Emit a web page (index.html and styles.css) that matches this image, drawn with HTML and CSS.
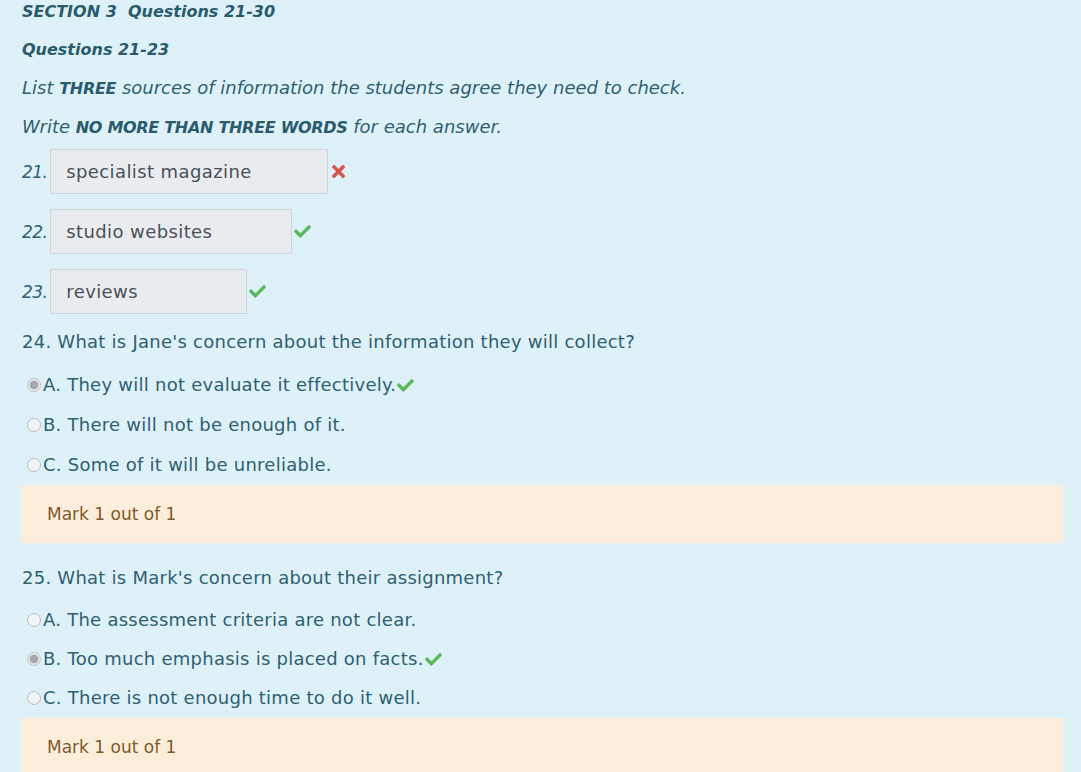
FILE: index.html
```html
<!DOCTYPE html>
<html lang="en">
<head>
<meta charset="utf-8">
<title>Section 3</title>
<link rel="stylesheet" href="styles.css">
</head>
<body>
<div class="page">
  <div class="intro">
    <p class="title">SECTION 3&nbsp; Questions 21-30</p>
    <p class="title">Questions 21-23</p>
    <p class="instr">List <b>THREE</b> sources of information the students agree they need to check.</p>
    <p class="instr last">Write <b>NO MORE THAN THREE WORDS</b> for each answer.</p>
  </div>

  <div class="gap-row">
    <span class="num">21.</span>
    <span class="field w1">specialist magazine</span>
    <svg class="cross" viewBox="0 80 352 352"><path d="M242.72 256l100.07-100.07c12.28-12.28 12.28-32.19 0-44.48l-22.24-22.24c-12.28-12.28-32.19-12.28-44.48 0L176 189.28 75.930 89.21c-12.28-12.28-32.19-12.28-44.48 0L9.21 111.45c-12.28 12.28-12.28 32.19 0 44.48L109.28 256 9.21 356.07c-12.28 12.28-12.28 32.190 0 44.480l22.24 22.24c12.28 12.28 32.2 12.28 44.48 0L176 322.72l100.07 100.07c12.28 12.28 32.2 12.28 44.48 0l22.24-22.240c12.28-12.28 12.28-32.19 0-44.48L242.72 256z"/></svg>
  </div>
  <div class="gap-row">
    <span class="num">22.</span>
    <span class="field w2">studio websites</span>
    <svg class="tick" viewBox="0 64 512 392"><path d="M173.898 439.404l-166.4-166.4c-9.997-9.997-9.997-26.206 0-36.204l36.203-36.204c9.997-9.998 26.207-9.998 36.204 0L192 312.69 432.095 72.596c9.997-9.997 26.207-9.997 36.204 0l36.203 36.204c9.997 9.997 9.997 26.206 0 36.204l-294.4 294.401c-9.998 9.997-26.207 9.997-36.204-.001z"/></svg>
  </div>
  <div class="gap-row">
    <span class="num">23.</span>
    <span class="field w3">reviews</span>
    <svg class="tick" viewBox="0 64 512 392"><path d="M173.898 439.404l-166.4-166.4c-9.997-9.997-9.997-26.206 0-36.204l36.203-36.204c9.997-9.998 26.207-9.998 36.204 0L192 312.69 432.095 72.596c9.997-9.997 26.207-9.997 36.204 0l36.203 36.204c9.997 9.997 9.997 26.206 0 36.204l-294.4 294.401c-9.998 9.997-26.207 9.997-36.204-.001z"/></svg>
  </div>

  <div class="mcq first">
    <p class="qtext">24. What is Jane's concern about the information they will collect?</p>
    <div class="opt"><span class="radio on"></span>A. They will not evaluate it effectively.<svg class="tick" viewBox="0 64 512 392"><path d="M173.898 439.404l-166.4-166.4c-9.997-9.997-9.997-26.206 0-36.204l36.203-36.204c9.997-9.998 26.207-9.998 36.204 0L192 312.69 432.095 72.596c9.997-9.997 26.207-9.997 36.204 0l36.203 36.204c9.997 9.997 9.997 26.206 0 36.204l-294.4 294.401c-9.998 9.997-26.207 9.997-36.204-.001z"/></svg></div>
    <div class="opt"><span class="radio"></span>B. There will not be enough of it.</div>
    <div class="opt"><span class="radio"></span>C. Some of it will be unreliable.</div>
    <div class="mark">Mark 1 out of 1</div>
  </div>

  <div class="mcq second">
    <p class="qtext">25. What is Mark's concern about their assignment?</p>
    <div class="opt"><span class="radio"></span>A. The assessment criteria are not clear.</div>
    <div class="opt"><span class="radio on"></span>B. Too much emphasis is placed on facts.<svg class="tick" viewBox="0 64 512 392"><path d="M173.898 439.404l-166.4-166.4c-9.997-9.997-9.997-26.206 0-36.204l36.203-36.204c9.997-9.998 26.207-9.998 36.204 0L192 312.69 432.095 72.596c9.997-9.997 26.207-9.997 36.204 0l36.203 36.204c9.997 9.997 9.997 26.206 0 36.204l-294.4 294.401c-9.998 9.997-26.207 9.997-36.204-.001z"/></svg></div>
    <div class="opt"><span class="radio"></span>C. There is not enough time to do it well.</div>
    <div class="mark">Mark 1 out of 1</div>
  </div>
</div>
</body>
</html>
```

FILE: styles.css
```css
html, body {
  margin: 0;
  padding: 0;
  background: #def1f8;
}
body {
  font-family: "DejaVu Sans", "Open Sans", sans-serif;
  font-size: 18px;
  letter-spacing: 0.25px;
  color: #2e5f72;
  overflow: hidden;
  height: 772px;
}
.page {
  padding: 0 18px 0 21px;
}
.intro p {
  margin: 0 0 14px;
  line-height: 24px;
  font-style: italic;
  padding-left: 1px;
  letter-spacing: 0;
}
.intro p.title {
  font-size: 16px;
  font-weight: 700;
  color: #2a5b6d;
}
.intro p.instr b {
  font-size: 16px;
  font-weight: 700;
  letter-spacing: -0.3px;
  color: #2a5b6d;
}
.intro p.last {
  margin-bottom: 9px;
}
.gap-row {
  display: flex;
  align-items: center;
  height: 45px;
  margin-bottom: 15px;
}
.num {
  font-style: italic;
  font-size: 17px;
  letter-spacing: -0.6px;
  padding-left: 1px;
  margin-right: 3px;
}
.field {
  box-sizing: border-box;
  height: 45px;
  display: flex;
  align-items: center;
  padding: 0 15px;
  background: #e9ecef;
  border: 1px solid #ced4da;
  color: #495057;
  letter-spacing: 0.4px;
}
.w1 { width: 278px; }
.w2 { width: 242px; }
.w3 { width: 197px; }
.cross {
  width: 13px;
  height: 13px;
  margin-left: 4px;
  fill: #d9534f;
}
.tick {
  width: 17px;
  height: 13px;
  margin-left: 2px;
  fill: #5cb85c;
}
.opt .tick {
  margin-left: 1px;
}
.mcq.first {
  margin-top: 16px;
}
.mcq {
  margin-top: 23px;
}
.qtext {
  margin: 0;
  line-height: 24px;
  padding-left: 1px;
}
.opt {
  display: flex;
  align-items: center;
  line-height: 24px;
  margin-top: 16px;
  padding-left: 6px;
}
.qtext + .opt {
  margin-top: 19px;
}
.second .opt {
  margin-top: 15px;
}
.second .qtext + .opt {
  margin-top: 18px;
}
.radio {
  box-sizing: border-box;
  width: 14px;
  height: 14px;
  border-radius: 50%;
  border: 1px solid #b8bcc0;
  background: #f3f4f5;
  margin-right: 2px;
  flex: none;
}
.radio.on {
  border-color: #c2c5c8;
  background: radial-gradient(circle, #a3a7ab 0, #a3a7ab 3.8px, #e2e4e6 4.6px);
}
.mark {
  margin-top: 8px;
  height: 58px;
  box-sizing: border-box;
  padding: 0 26px;
  display: flex;
  align-items: center;
  background: #fdeedc;
  color: #7d5a29;
  font-size: 17px;
  letter-spacing: 0;
}
```
